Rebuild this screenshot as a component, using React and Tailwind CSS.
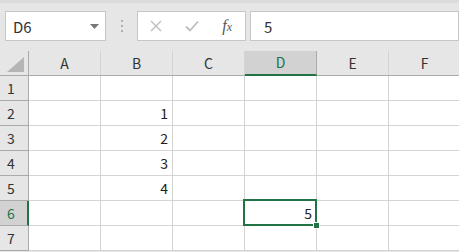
import React from "react";

const cols = ["A", "B", "C", "D", "E", "F"];
const rows = [1, 2, 3, 4, 5, 6, 7];
const values = { 2: { B: "1" }, 3: { B: "2" }, 4: { B: "3" }, 5: { B: "4" }, 6: { D: "5" } };

const App = () => {
  return (
    <div
      className="w-[459px] h-[252px] overflow-hidden bg-[#e6e6e6] text-[#222]"
      style={{ fontFamily: '"Noto Sans CJK JP", "Noto Sans", sans-serif' }}
    >
      {/* formula bar */}
      <div className="h-[51px] flex items-start pt-[11px] pl-[5px] border-t-[3px] border-[#dcdcdc]">
        <div className="w-[101px] h-[30px] -mt-[3px] bg-white border border-[#c6c6c6] flex items-center justify-between pl-[7px] pr-[6px]">
          <span className="text-[15px] leading-none text-[#333]">D6</span>
          <svg width="9" height="5" viewBox="0 0 9 5">
            <path d="M0 0h9L4.5 5z" fill="#777" />
          </svg>
        </div>
        <div className="w-[31px] h-[30px] -mt-[3px] flex flex-col items-center justify-center gap-[3px]">
          <span className="w-[2px] h-[2px] bg-[#b0b0b0]" />
          <span className="w-[2px] h-[2px] bg-[#b0b0b0]" />
          <span className="w-[2px] h-[2px] bg-[#b0b0b0]" />
        </div>
        <div className="w-[109px] h-[30px] -mt-[3px] bg-white border border-[#c6c6c6] flex items-center">
          <div className="w-[36px] flex justify-center">
            <svg width="12" height="12" viewBox="0 0 12 12">
              <path d="M1 1l10 10M11 1L1 11" stroke="#bdbdbd" strokeWidth="1.4" />
            </svg>
          </div>
          <div className="w-[36px] flex justify-center">
            <svg width="14" height="12" viewBox="0 0 14 12">
              <path d="M1 6.5l4 4L13 1.5" stroke="#bdbdbd" strokeWidth="1.8" fill="none" />
            </svg>
          </div>
          <div className="w-[36px] flex justify-center">
            <span
              className="text-[16px] italic text-[#555] leading-none"
              style={{ fontFamily: '"Liberation Serif", serif' }}
            >
              f<span className="text-[12px]">x</span>
            </span>
          </div>
        </div>
        <div className="flex-1 h-[30px] -mt-[3px] ml-[4px] bg-white border border-[#c6c6c6] flex items-center pl-[13px]">
          <span className="text-[15px] leading-none text-[#333]">5</span>
        </div>
      </div>

      {/* grid */}
      <div className="bg-white">
        <div className="flex h-[25px] bg-[#e6e6e6] border-b border-[#ababab]">
          <div className="w-[29px] border-r border-[#ababab] relative shrink-0">
            <svg className="absolute right-[4px] bottom-[3px]" width="17" height="15" viewBox="0 0 17 15">
              <path d="M17 0V15H0z" fill="#b5b5b5" />
            </svg>
          </div>
          {cols.map((c) => (
            <div
              key={c}
              className={
                c === "D"
                  ? "w-[72px] shrink-0 border-r border-[#ababab] bg-[#d2d2d2] text-[#217346] flex items-center justify-center text-[14px] border-b-2 border-b-[#217346] -mb-[1px]"
                  : "w-[72px] shrink-0 border-r border-[#d4d4d4] flex items-center justify-center text-[14px] text-[#333]"
              }
            >
              {c}
            </div>
          ))}
        </div>
        {rows.map((r) => (
          <div key={r} className="flex h-[25px]">
            <div
              className={
                r === 6
                  ? "w-[29px] shrink-0 bg-[#d2d2d2] border-r-2 border-[#217346] border-b border-b-[#ababab] text-[#217346] text-[14px] flex items-center pl-[7px]"
                  : "w-[29px] shrink-0 bg-[#e6e6e6] border-r border-[#ababab] border-b border-b-[#ababab] text-[#333] text-[14px] flex items-center pl-[7px]"
              }
            >
              {r}
            </div>
            {cols.map((c) => {
              const sel = r === 6 && c === "D";
              return (
                <div
                  key={c}
                  className="w-[72px] shrink-0 border-r border-b border-[#d4d4d4] relative flex items-center justify-end pr-[4px] text-[14px] text-[#222]"
                >
                  {values[r] && values[r][c]}
                  {sel && (
                    <>
                      <div className="absolute z-10 -left-[2px] -top-[2px] w-[74px] h-[27px] border-2 border-[#217346]" />
                      <div className="absolute z-20 -right-[4px] -bottom-[4px] w-[7px] h-[7px] bg-[#217346] border border-white" />
                    </>
                  )}
                </div>
              );
            })}
          </div>
        ))}
      </div>
    </div>
  );
};

export default App;
